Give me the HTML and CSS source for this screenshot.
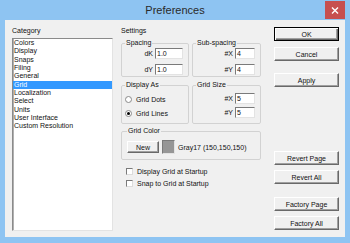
FILE: index.html
```html
<!DOCTYPE html>
<html>
<head>
<meta charset="utf-8">
<link rel="stylesheet" href="styles.css">
</head>
<body>
<div class="window">
  <div class="titlebar">
    <span></span>
    <span class="title">Preferences</span>
    <span class="close"><svg width="8" height="7" viewBox="0 0 8 7"><path d="M1 0.5 L7 6.5 M7 0.5 L1 6.5" stroke="#fff" stroke-width="1.4"/></svg></span>
  </div>
  <div class="client">
    <div class="left">
      <div class="lbl">Category</div>
      <div class="listbox">
        <div class="item">Colors</div>
        <div class="item">Display</div>
        <div class="item">Snaps</div>
        <div class="item">Filing</div>
        <div class="item">General</div>
        <div class="item sel">Grid</div>
        <div class="item">Localization</div>
        <div class="item">Select</div>
        <div class="item">Units</div>
        <div class="item">User Interface</div>
        <div class="item">Custom Resolution</div>
      </div>
    </div>
    <div class="middle">
      <div class="lbl settings">Settings</div>
      <div class="grouprow">
        <fieldset class="group g-spacing">
          <legend>Spacing</legend>
          <div class="rows">
            <div class="row"><span>dK</span><span class="field wide">1.0</span></div>
            <div class="row"><span>dY</span><span class="field wide">1.0</span></div>
          </div>
        </fieldset>
        <fieldset class="group g-sub">
          <legend>Sub-spacing</legend>
          <div class="rows">
            <div class="row"><span>#X</span><span class="field">4</span></div>
            <div class="row"><span>#Y</span><span class="field">4</span></div>
          </div>
        </fieldset>
      </div>
      <div class="grouprow row2">
        <fieldset class="group g-display">
          <legend>Display As</legend>
          <div class="radios">
            <div class="radio"><span class="dot"></span><span>Grid Dots</span></div>
            <div class="radio"><span class="dot on"></span><span>Grid Lines</span></div>
          </div>
        </fieldset>
        <fieldset class="group g-size">
          <legend>Grid Size</legend>
          <div class="rows tight">
            <div class="row"><span>#X</span><span class="field">5</span></div>
            <div class="row"><span>#Y</span><span class="field">5</span></div>
          </div>
        </fieldset>
      </div>
      <fieldset class="group g-color">
        <legend>Grid Color</legend>
        <div class="colorrow">
          <span class="btn newbtn">New</span>
          <span class="swatch"></span>
          <span class="colortext">Gray17 (150,150,150)</span>
        </div>
      </fieldset>
      <div class="check first"><span class="box"></span><span>Display Grid at Startup</span></div>
      <div class="check"><span class="box"></span><span>Snap to Grid at Startup</span></div>
    </div>
    <div class="buttons">
      <span class="btn default b-ok">OK</span>
      <span class="btn b-cancel">Cancel</span>
      <span class="btn b-apply">Apply</span>
      <span class="btn b-revert">Revert Page</span>
      <span class="btn b-revertall">Revert All</span>
      <span class="btn b-factory">Factory Page</span>
      <span class="btn b-factoryall">Factory All</span>
    </div>
  </div>
</div>
</body>
</html>
```
FILE: styles.css
```css
html, body { margin: 0; padding: 0; }
body {
  width: 350px;
  height: 243px;
  overflow: hidden;
  font-family: "Liberation Sans", Arial, sans-serif;
  font-size: 7px;
  color: #111;
}
.window {
  width: 350px;
  height: 243px;
  box-sizing: border-box;
  background: #8ec4f2;
  padding: 0 5px 6px 5px;
  display: flex;
  flex-direction: column;
}
.titlebar {
  height: 20px;
  display: grid;
  grid-template-columns: 1fr auto 1fr;
  align-items: center;
}
.title {
  font-family: "Liberation Sans", Arial, sans-serif;
  font-size: 11px;
  color: #2a2a2a;
  line-height: 20px;
}
.close {
  justify-self: end;
  align-self: start;
  margin-top: 1px;
  width: 20px;
  height: 18px;
  background: #c75050;
  display: flex;
  align-items: center;
  justify-content: center;
}
.close svg { display: block; }
.client {
  flex: 1;
  background: #f0f0f0;
  padding: 7px 6px 6px 7px;
  display: flex;
  min-height: 0;
}
.lbl { line-height: 8px; height: 8px; }
.left {
  width: 101px;
  display: flex;
  flex-direction: column;
}
.listbox {
  margin-top: 3px;
  flex: 1;
  background: #fff;
  border: 1px solid;
  border-color: #8a8a8a #e3e3e3 #e3e3e3 #8a8a8a;
  box-shadow: inset 1px 0 0 #b0b0b0;
}
.item {
  height: 8.33px;
  line-height: 8.33px;
  padding-left: 1px;
  white-space: nowrap;
}
.item.sel { background: #3399ff; color: #fff; }
.middle {
  width: 140px;
  margin-left: 8px;
  display: flex;
  flex-direction: column;
}
.settings { margin-bottom: 4px; }
.grouprow {
  display: flex;
  gap: 3px;
}
.row2 { margin-top: 4px; }
.group {
  margin: 0;
  min-width: 0;
  border: 1px solid #d2d2d2;
  border-radius: 2px;
  padding: 1px 5px 1px 3px;
  box-sizing: border-box;
}
.group legend {
  padding: 0 1px;
  line-height: 8px;
  height: 8px;
}
.g-spacing, .g-display { width: 68px; }
.g-sub, .g-size { width: 69px; }
.rows {
  display: flex;
  flex-direction: column;
  gap: 5px;
}
.rows.tight { gap: 3px; padding-top: 3px; padding-bottom: 2px; }
.row {
  display: flex;
  justify-content: flex-end;
  align-items: center;
  gap: 2px;
  height: 11px;
}
.field {
  box-sizing: border-box;
  width: 20px;
  height: 11px;
  background: #fff;
  border: 1px solid;
  border-color: #7a7a7a #e3e3e3 #e3e3e3 #7a7a7a;
  padding-left: 1px;
  line-height: 9px;
}
.field.wide { width: 28px; }
.radios {
  display: flex;
  flex-direction: column;
  padding: 2px 0 2px 0;
}
.radio {
  height: 14px;
  display: flex;
  align-items: center;
  gap: 4px;
}
.dot {
  box-sizing: border-box;
  width: 7px;
  height: 7px;
  border-radius: 50%;
  border: 1px solid #8a8a8a;
  background: #fff;
  display: flex;
  align-items: center;
  justify-content: center;
}
.dot.on::after {
  content: "";
  width: 3px;
  height: 3px;
  border-radius: 50%;
  background: #000;
}
.g-color {
  margin-top: 3px;
  width: 140px;
  padding: 5px 5px 5px 5px;
}
.colorrow {
  display: flex;
  align-items: center;
  height: 14px;
}
.btn {
  box-sizing: border-box;
  display: flex;
  align-items: center;
  justify-content: center;
  background: #f0f0f0;
  border: 1px solid;
  border-color: #fff #696969 #696969 #fff;
  box-shadow: inset -1px -1px 0 #a0a0a0;
  white-space: nowrap;
}
.btn.default {
  border: 1px solid #000;
  box-shadow: inset 1px 1px 0 #fff, inset -1px -1px 0 #696969, inset -2px -2px 0 #a0a0a0;
}
.newbtn { width: 32px; height: 12px; }
.swatch {
  box-sizing: border-box;
  width: 13px;
  height: 14px;
  margin-left: 3px;
  background: #969696;
  border: 1px solid;
  border-color: #7a7a7a #e3e3e3 #e3e3e3 #7a7a7a;
}
.colortext { margin-left: 3px; white-space: nowrap; }
.check {
  display: flex;
  align-items: center;
  gap: 4px;
  height: 8px;
  margin-top: 4px;
  padding-left: 5px;
}
.check.first { margin-top: 7px; }
.box {
  box-sizing: border-box;
  width: 7px;
  height: 7px;
  background: #fff;
  border: 1px solid;
  border-color: #7a7a7a #dcdcdc #dcdcdc #7a7a7a;
}
.buttons {
  width: 65px;
  margin-left: 13px;
  display: flex;
  flex-direction: column;
}
.buttons .btn { height: 14px; }
.b-cancel { margin-top: 6px; }
.b-apply { margin-top: 12px; }
.b-revert { margin-top: 64px; }
.b-revertall { margin-top: 5px; }
.b-factory { margin-top: 13px; }
.b-factoryall { margin-top: 5px; }
```
